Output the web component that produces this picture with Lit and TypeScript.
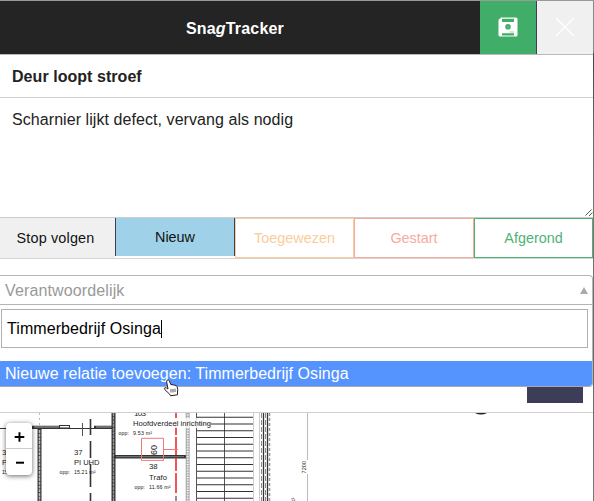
import { LitElement, html, svg, css } from "lit";
import { customElement } from "lit/decorators.js";

@customElement("floor-plan")
class FloorPlan extends LitElement {
  static styles = css`
    :host { display: block; height: 88px; background: #fff; }
    svg { display: block; }
    text { font-family: "Liberation Sans", Arial, sans-serif; fill: #222; }
  `;

  private stairs = Array.from({ length: 13 }, (_, i) => 4.2 + i * 6.75);

  render() {
    return html`<svg width="594" height="88" viewBox="0 413 594 88">
      <path d="M475 413h12q-6 3.2 -12 0z" fill="#222" />
      <line x1="39.5" y1="413" x2="39.5" y2="428" stroke="#bbb" stroke-dasharray="2 3" />
      <g stroke="#333" fill="none">
        <path d="M0 428.5H113" stroke-width="1.2" />
        <path d="M32 427H60M94 427H113" stroke-width="2.4" />
        <path d="M34 427H59M96 427H112" stroke="#aaa" stroke-width="1" />
        <rect x="59.5" y="425.5" width="10" height="2.5" fill="#fff" />
        <path d="M82.5 423V436" stroke="#555" />
        <path d="M90.5 419V435M90.5 441V458M90.5 464V487M90.5 493V501" stroke-width="1.6" />
        <path d="M39.5 428V501" stroke-width="4" />
        <path d="M39.5 430V501" stroke="#bbb" stroke-width="1.6" stroke-dasharray="3 .7" />
        <path d="M113.5 413V501" stroke-width="4" />
        <path d="M113.5 413V501" stroke="#999" stroke-width="1.4" stroke-dasharray="3 .7" />
        <path d="M114 456.7H186" stroke-width="3.6" />
        <path d="M116 456.7H184" stroke="#888" stroke-width=".9" />
      </g>
      <g fill="none">
        <path d="M187.5 413V501" stroke="#bbb" stroke-width="3" stroke-dasharray="1.6 1" />
        <path d="M186.2 413V501M189.2 413V501" stroke="#888" stroke-width=".7" />
        <path d="M196.5 413V501M224.5 413V501" stroke="#555" />
        <path d="M176 413V418M176 421V435M176 437V455M176 458V471M176 473V493" stroke="#f04444" stroke-width="1.8" />
        <path d="M176 496V501" stroke="#777" stroke-width="1.6" />
        <path d="M163.5 438.3H141.5V460.4H163.5V438.3M163.5 449.5H178" stroke="#f27878" />
      </g>
      ${this.stairs.map((y) => svg`<line x1="197" x2="253" y1=${413 + y} y2=${413 + y} stroke="#333" stroke-width="1.1" />`)}
      <g fill="none">
        <path d="M253.5 413V501M259.5 413V501" stroke="#ccc" />
        <path d="M263.5 413V501M267.5 413V501" stroke="#333" stroke-width="1.3" />
        <path d="M261.5 413V501M265.5 413V501" stroke="#888" stroke-dasharray="5 2" />
        <path d="M269.5 413V501" stroke="#999" stroke-width="1.6" stroke-dasharray="3 2" />
        <path d="M307.5 413V460M307.5 474V501" stroke="#bbb" />
      </g>
      <rect x="132" y="418" width="79" height="10" fill="#fff" fill-opacity=".8" />
      <text x="134" y="416.2" font-size="8" textLength="12">103</text>
      <text x="133" y="425.8" font-size="7.4" textLength="78" lengthAdjust="spacingAndGlyphs">Hoofdverdeel inrichting</text>
      <text x="118.5" y="435" font-size="5.2" textLength="10.5">opp:</text>
      <text x="133" y="435" font-size="5.3" textLength="19">9.53 m²</text>
      <text x="149" y="469" font-size="7.8">38</text>
      <text x="149" y="479.5" font-size="7.6" textLength="18">Trafo</text>
      <text x="134.5" y="488.5" font-size="5.2" textLength="10.5">opp:</text>
      <text x="149" y="488.5" font-size="5.3" textLength="21.5">11.66 m²</text>
      <text transform="translate(157 455) rotate(-90)" font-size="9">60</text>
      <text x="74" y="454.5" font-size="7.8">37</text>
      <text x="74" y="464.7" font-size="7.6" textLength="25.5">PI UHD</text>
      <text x="59.5" y="474" font-size="5.2" textLength="10.5">opp:</text>
      <text x="74" y="474" font-size="5.3" textLength="21.5">15.21 m²</text>
      <text x="2" y="454.5" font-size="7.8">3</text>
      <text x="2" y="464.7" font-size="7.6">PI</text>
      <text x="2" y="474" font-size="5.3">15</text>
      <text transform="translate(306 473.5) rotate(-90)" font-size="5.5" textLength="12.5">7200</text>
      <text transform="translate(293.5 502) rotate(-45)" font-size="5.5">0</text>
    </svg>`;
  }
}

@customElement("app-root")
class AppRoot extends LitElement {
  static styles = css`
    :host {
      display: block; position: relative; width: 594px; height: 501px; overflow: hidden;
      background: #fff; font-family: "Liberation Sans", Arial, sans-serif; font-size: 16px; color: #222;
    }
    * { box-sizing: border-box; }
    .panel { display: flex; flex-direction: column; height: 413px; border-top: 1px solid #999; border-bottom: 1px solid #d0d0d0; }
    .head { display: flex; height: 54px; border-bottom: 1px solid #bbb; background: #242424; flex: none; width: 593px; }
    .brand { width: 480px; padding-left: 186px; line-height: 56px; color: #fff; font-weight: bold; white-space: nowrap; letter-spacing: .17px; }
    .save { width: 57px; background: #40ad68; border-right: 1px solid #3d4055; display: flex; align-items: center; justify-content: center; padding-bottom: 1px; }
    .close { width: 56px; background: #f0f0f0; display: flex; align-items: center; justify-content: center; padding-bottom: 1px; }
    .title { height: 43px; padding-left: 12px; line-height: 43px; font-weight: bold; border-bottom: 1px solid #d0d0d0; flex: none; white-space: nowrap; letter-spacing: .05px; }
    .note { height: 119px; padding: 12px 0 0 12px; line-height: 19px; flex: none; display: flex; justify-content: space-between; white-space: nowrap; letter-spacing: .067px; }
    .grip { align-self: flex-end; margin-right: 1px; }
    .states { display: flex; height: 42px; width: 593px; flex: none; border-top: 1px solid #ccc; border-bottom: 1px solid #d4d4d4; font-size: 14.4px; }
    .state { flex: none; display: flex; align-items: center; justify-content: center; white-space: nowrap; padding-bottom: 1px; }
    .stop { width: 115px; background: #f0f0f0; color: #111; padding-right: 4px; letter-spacing: .16px; }
    .new { width: 120px; height: 38px; background: #9fd2e8; color: #111; border: solid #3d4055; border-width: 0 1px; padding-bottom: 0; }
    .assigned { width: 119px; color: #fbcd9b; border: 1px solid #fbcd9b; }
    .started { width: 120px; color: #f9aa9e; border: 1px solid #f9aa9e; }
    .done { width: 119px; color: #4db375; border: 1px solid #4db375; }
    .select { margin-top: 16px; height: 30px; width: 593px; flex: none; border: 1px solid #b5b5b5; border-left: 0; border-top-right-radius: 4px; display: flex; align-items: center; justify-content: space-between; padding: 1px 4px 0 5px; color: #999; white-space: nowrap; letter-spacing: .13px; }
    .drop { height: 82px; width: 593px; flex: none; border-right: 1px solid #b5b5b5; border-bottom: 1px solid #aaa; border-bottom-right-radius: 4px; overflow: hidden; display: flex; flex-direction: column; justify-content: space-between; padding-top: 4px; }
    .field { margin-left: 1px; width: 587px; height: 39px; border: 1px solid #b0b0b0; display: flex; align-items: center; padding-left: 5px; color: #000; white-space: nowrap; letter-spacing: .08px; }
    .caret { width: 1px; height: 18px; background: #000; }
    .option { height: 25px; background: #5593ff; color: #fff; padding-left: 5px; line-height: 25px; white-space: nowrap; letter-spacing: .045px; }
    .submit { align-self: flex-end; width: 56px; height: 16px; margin-right: 11px; background: #3d3d59; flex: none; }
    .zoom { position: absolute; left: 6px; top: 423px; width: 26px; height: 52px; border-radius: 4px; background: #fff; box-shadow: 0 1px 5px rgba(0,0,0,.6); display: flex; flex-direction: column; }
    .zoom svg { display: block; height: 26px; }
    .zoom svg:first-child { border-bottom: 1px solid #ccc; }
    .pointer { position: absolute; left: 163px; top: 379px; }
    .edge { position: absolute; right: 0; top: 1px; width: 1px; height: 500px; background: linear-gradient(#888 0, #888 50px, #444 54px, #666 130px, #777 220px, #666 350px, #777 500px); }
  `;

  render() {
    return html`
      <div class="panel">
        <div class="head">
          <div class="brand">Sna<i>g</i>Tracker</div>
          <div class="save">
            <svg width="20" height="20" viewBox="0 0 20 20">
              <path d="M3 .5H18Q19.5 .5 19.5 2V18Q19.5 19.5 18 19.5H2Q.5 19.5 .5 18V3Z" fill="#fff" />
              <path d="M4 1.7H16V5H4Z M4 16.2H16V18.5H4Z M11.5 14.7H16V15.3H11.5Z" fill="#40ad68" />
              <circle cx="10" cy="9.7" r="2.8" fill="#40ad68" /><path d="M8.7 9.9h2.4" stroke="#88cda1" stroke-width=".7" />
            </svg>
          </div>
          <div class="close"><svg width="20" height="20" viewBox="0 0 20 20"><path d="M1 1L19 19M19 1L1 19" stroke="#fff" stroke-width="1.4" /></svg></div>
        </div>
        <div class="title">Deur loopt stroef</div>
        <div class="note"><span>Scharnier lijkt defect, vervang als nodig</span>
          <svg class="grip" width="9" height="9" viewBox="0 0 9 9"><path d="M1.5 7.5L7.5 1.5M5 8L8.5 4.5" stroke="#555" /></svg>
        </div>
        <div class="states">
          <div class="state stop">Stop volgen</div>
          <div class="state new">Nieuw</div>
          <div class="state assigned">Toegewezen</div>
          <div class="state started">Gestart</div>
          <div class="state done">Afgerond</div>
        </div>
        <div class="select"><span>Verantwoordelijk</span><svg width="8" height="7" viewBox="0 0 8 7"><path d="M4 0L8 7H0Z" fill="#aaa" /></svg></div>
        <div class="drop">
          <div class="field"><span>Timmerbedrijf Osinga</span><span class="caret"></span></div>
          <div class="option">Nieuwe relatie toevoegen: Timmerbedrijf Osinga</div>
        </div>
        <div class="submit"></div>
      </div>
      <floor-plan></floor-plan>
      <div class="zoom">
        <svg width="26" viewBox="0 0 26 26"><path d="M8.5 14.5H18.5M13.5 9.5V19.5" stroke="#000" stroke-width="2" /></svg>
        <svg width="26" viewBox="0 0 26 26"><path d="M10 13.7H18" stroke="#000" stroke-width="2" /></svg>
      </div>
      <svg class="pointer" width="16" height="18" viewBox="0 0 16 18">
        <path d="M4.2 1.2Q5.2 .3 6.2 1.7L8 5.8Q9 5 10 6Q11.2 5.4 12 6.5Q13.5 6 14 7.5Q15.3 10.5 14.5 13L14.5 15.8L7.5 16.8L6.7 15.2L2 10.8Q.5 9 2 8.7Q3.2 8.6 5 10L3.7 3.1Q3.4 1.8 4.2 1.2Z" fill="#fff" stroke="#222" stroke-width="1" />
        <path d="M8 10V13.5M10 10V13.5M12 9.8V13" stroke="#333" stroke-width=".8" />
      </svg>
      <div class="edge"></div>
    `;
  }
}
